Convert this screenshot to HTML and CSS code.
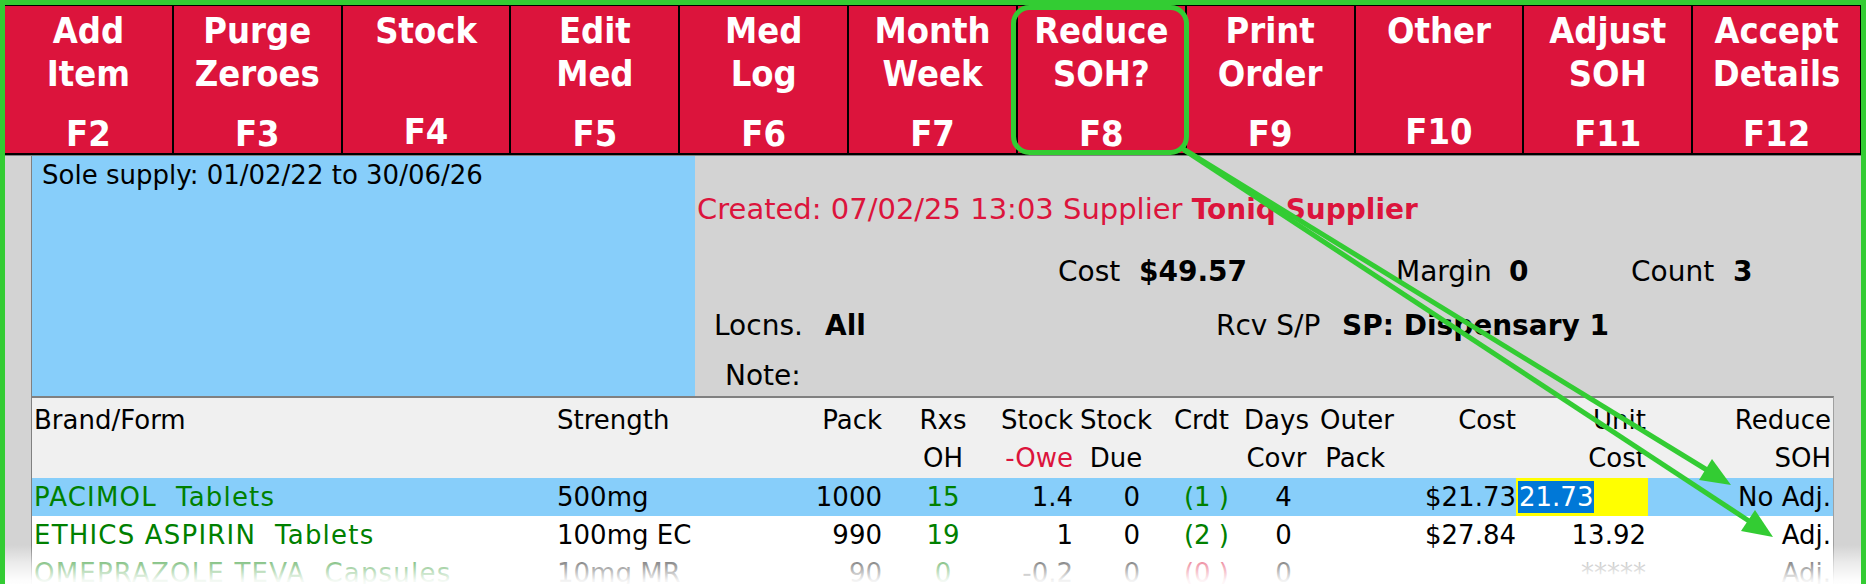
FILE: index.html
```html
<!DOCTYPE html>
<html>
<head>
<meta charset="utf-8">
<title>Order</title>
<link rel="stylesheet" href="styles.css">
</head>
<body>
<div class="frame">
  <div class="toolbar">
    <div class="fkey"><div class="lbl">Add<br>Item</div><div class="key">F2</div></div>
    <div class="fkey"><div class="lbl">Purge<br>Zeroes</div><div class="key">F3</div></div>
    <div class="fkey"><div class="lbl">Stock</div><div class="key">F4</div></div>
    <div class="fkey"><div class="lbl">Edit<br>Med</div><div class="key">F5</div></div>
    <div class="fkey"><div class="lbl">Med<br>Log</div><div class="key">F6</div></div>
    <div class="fkey"><div class="lbl">Month<br>Week</div><div class="key">F7</div></div>
    <div class="fkey"><div class="lbl">Reduce<br>SOH?</div><div class="key">F8</div></div>
    <div class="fkey"><div class="lbl">Print<br>Order</div><div class="key">F9</div></div>
    <div class="fkey"><div class="lbl">Other</div><div class="key">F10</div></div>
    <div class="fkey"><div class="lbl">Adjust<br>SOH</div><div class="key">F11</div></div>
    <div class="fkey"><div class="lbl">Accept<br>Details</div><div class="key">F12</div></div>
  </div>
  <div class="main">
    <div class="info">
      <div class="sole">Sole supply: 01/02/22 to 30/06/26</div>
      <div class="details">
        <div class="created">Created: 07/02/25 13:03 Supplier <b>Toniq Supplier</b></div>
        <div class="drow costrow">
          <span class="w-cost">Cost</span><b class="w-costv">$49.57</b><span class="w-margin">Margin</span><b class="w-marginv">0</b><span class="w-count">Count</span><b>3</b>
        </div>
        <div class="drow locrow">
          <span class="w-locns">Locns.</span><b class="w-all">All</b><span class="w-rcv">Rcv S/P</span><b>SP: Dispensary 1</b>
        </div>
        <div class="drow noterow">Note:</div>
      </div>
    </div>
    <div class="table">
      <div class="tr thead">
        <div class="l">Brand/Form</div>
        <div class="l">Strength</div>
        <div class="r">Pack</div>
        <div class="c">Rxs<br>OH</div>
        <div class="r">Stock<br><span class="cr">-Owe</span></div>
        <div class="c">Stock<br>Due</div>
        <div class="r">Crdt</div>
        <div class="c">Days<br>Covr</div>
        <div class="r">Outer<br>Pack</div>
        <div class="r r0">Cost</div>
        <div class="r r2p">Unit<br>Cost</div>
        <div class="r r2p">Reduce<br>SOH</div>
      </div>
      <div class="tr sel-row">
        <div class="l g name">PACIMOL  Tablets</div>
        <div class="l">500mg</div>
        <div class="r">1000</div>
        <div class="c g">15</div>
        <div class="r">1.4</div>
        <div class="r due">0</div>
        <div class="r g">(1 )</div>
        <div class="c days">4</div>
        <div class="r"></div>
        <div class="r r0">$21.73</div>
        <div class="inp"><span class="hl">21.73</span></div>
        <div class="r r2p">No Adj.</div>
      </div>
      <div class="tr white">
        <div class="l g name">ETHICS ASPIRIN  Tablets</div>
        <div class="l">100mg EC</div>
        <div class="r">990</div>
        <div class="c g">19</div>
        <div class="r">1</div>
        <div class="r due">0</div>
        <div class="r g">(2 )</div>
        <div class="c days">0</div>
        <div class="r"></div>
        <div class="r r0">$27.84</div>
        <div class="r r2p">13.92</div>
        <div class="r r2p">Adj.</div>
      </div>
      <div class="tr white">
        <div class="l g name">OMEPRAZOLE TEVA  Capsules</div>
        <div class="l">10mg MR</div>
        <div class="r">90</div>
        <div class="c g">0</div>
        <div class="r">-0.2</div>
        <div class="r due">0</div>
        <div class="r cr">(0 )</div>
        <div class="c days">0</div>
        <div class="r"></div>
        <div class="r r0"></div>
        <div class="r r2p gr">*****</div>
        <div class="r r2p">Adj.</div>
      </div>
    </div>
  </div>
  <div class="fade"></div>
  <svg class="annot" width="1866" height="584" viewBox="0 0 1866 584">
    <rect x="1013.5" y="7.5" width="173" height="145" rx="16" ry="16" fill="none" stroke="#33cc33" stroke-width="5"/>
    <line x1="1180" y1="147" x2="1707" y2="470" stroke="#33cc33" stroke-width="5"/>
    <polygon points="1731,485 1699,480 1712,459" fill="#33cc33"/>
    <line x1="1184" y1="150" x2="1749" y2="521" stroke="#33cc33" stroke-width="5"/>
    <polygon points="1773,537 1741,531 1755,510" fill="#33cc33"/>
  </svg>
</div>
</body>
</html>
```

FILE: styles.css
```css
* {
  box-sizing: border-box;
  margin: 0;
  padding: 0;
}

body {
  margin: 0;
  background: #ffffff;
  font-family: "DejaVu Sans", "Liberation Sans", sans-serif;
  color: #000;
}

.frame {
  position: relative;
  width: 1866px;
  height: 584px;
  overflow: hidden;
  border: 5px solid #33cc33;
  border-bottom: 0;
  display: flex;
  flex-direction: column;
}

/* ---------- function key toolbar ---------- */
.toolbar {
  flex: none;
  display: grid;
  grid-template-columns: repeat(11, 1fr);
  gap: 2px;
  height: 150px;
  background: #000;
  border-top: 1px solid #000;
  border-bottom: 2px solid #000;
  border-right: 1px solid #000;
}

.fkey {
  background: #dc143c;
  color: #fff;
  font-family: "DejaVu Sans Condensed", "DejaVu Sans", "Liberation Sans", sans-serif;
  font-stretch: condensed;
  font-weight: bold;
  font-size: 36px;
  line-height: 43px;
  text-align: center;
  padding-top: 3px;
  display: flex;
  flex-direction: column;
  align-items: center;
  overflow: hidden;
}

.lbl {
  height: 86px;
}

.key {
  margin-top: 17px;
}

/* ---------- main area ---------- */
.main {
  flex: 1;
  background: #d3d3d3;
  border-top: 1px solid #808080;
  padding-left: 26px;
  display: flex;
  flex-direction: column;
}

.info {
  flex: none;
  height: 240px;
  display: flex;
}

.sole {
  flex: none;
  width: 664px;
  background: #87cefa;
  border-left: 1px solid #808080;
  font-size: 26px;
  line-height: 30px;
  padding: 4px 0 0 10px;
}

.details {
  flex: 1;
  font-size: 28px;
  line-height: 40px;
  padding-top: 33px;
  white-space: nowrap;
}

.created {
  color: #dc143c;
  padding-left: 2px;
  font-size: 29px;
}

.created b {
  font-size: 28px;
}

.drow {
  display: flex;
  height: 40px;
}

.drow > * {
  flex: none;
}

.costrow {
  margin-top: 22px;
  padding-left: 363px;
}

.w-cost { width: 81px; }
.w-costv { width: 257px; }
.w-margin { width: 113px; }
.w-marginv { width: 122px; }
.w-count { width: 102px; }

.locrow {
  margin-top: 14px;
  padding-left: 19px;
}

.w-locns { width: 111px; }
.w-all { width: 391px; }
.w-rcv { width: 126px; }

.noterow {
  margin-top: 10px;
  padding-left: 30px;
}

/* ---------- grid of items ---------- */
.table {
  flex: 1;
  margin-right: 27px;
  border-left: 1px solid #808080;
  border-right: 1px solid #a0a0a0;
  border-top: 2px solid #808080;
  background: #f0f0f0;
  font-size: 26px;
}

.tr {
  display: grid;
  grid-template-columns: 523px 245px 86px 114px 77px 78px 78px 87px 69px 127px 132px 185px;
  height: 38px;
  line-height: 38px;
  white-space: pre;
}

.tr.thead {
  height: 80px;
  padding-top: 3px;
}

.sel-row {
  background: #87cefa;
}

.white {
  background: #ffffff;
}

.l {
  text-align: left;
  padding-left: 2px;
}

.r {
  text-align: right;
  padding-right: 4px;
}

.c {
  text-align: center;
}

.name {
  letter-spacing: 1.2px;
}

.r0 {
  padding-right: 0;
}

.r2p {
  padding-right: 2px;
}

.due {
  padding-right: 15px;
}

.days {
  padding-left: 14px;
}

.g {
  color: #008000;
}

.cr {
  color: #dc143c;
}

.gr {
  color: #8c8c8c;
}

.inp {
  background: #ffff00;
  display: flex;
  align-items: center;
  padding-left: 2px;
}

.hl {
  background: #0078d7;
  color: #fff;
  line-height: 32px;
  padding: 0 1px;
}

/* ---------- overlays ---------- */
.fade {
  position: absolute;
  left: -5px;
  right: -5px;
  top: 540px;
  height: 44px;
  background: linear-gradient(to bottom, rgba(255,255,255,0) 0%, rgba(255,255,255,0.55) 40%, rgba(255,255,255,0.95) 80%, #fff 100%);
  pointer-events: none;
}

.annot {
  position: absolute;
  left: -5px;
  top: -5px;
  pointer-events: none;
}
```
